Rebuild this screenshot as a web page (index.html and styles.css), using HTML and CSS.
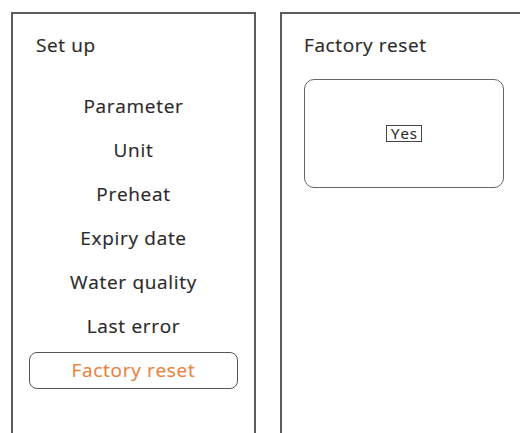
FILE: index.html
```html
<!DOCTYPE html>
<html lang="en">

<head>
    <meta charset="UTF-8">
    <meta name="viewport" content="width=device-width, initial-scale=1.0">
    <title>Set up</title>
    <link rel="stylesheet" href="styles.css">
</head>

<body>
    <div class="screens">
        <!-- menu screen -->
        <div class="panel panel-menu">
            <div class="title">Set up</div>
            <ul class="menu">
                <li class="menu-item">Parameter</li>
                <li class="menu-item">Unit</li>
                <li class="menu-item">Preheat</li>
                <li class="menu-item">Expiry date</li>
                <li class="menu-item">Water quality</li>
                <li class="menu-item">Last error</li>
                <li class="menu-item active"><span class="active-box">Factory reset</span></li>
            </ul>
        </div>

        <!-- confirm screen -->
        <div class="panel panel-confirm">
            <div class="title">Factory reset</div>
            <div class="dialog">
                <span class="yes">Yes</span>
            </div>
        </div>
    </div>
</body>

</html>
```

FILE: styles.css
```css
html,
body {
    margin: 0;
    height: 100%;
    overflow: hidden;
    background: #fff;
}

body {
    font-family: "Open Sans", "DejaVu Sans", sans-serif;
    color: #2a2a2a;
    /* the screen font is a bit heavier than Open Sans regular */
    -webkit-text-stroke: 0.2px;
}

.screens {
    display: flex;
    gap: 24px;
    padding: 12px 0 0 11px;
}

.panel {
    height: 421px;
    border: 2px solid #5c5c5c;
    border-bottom: none;
    box-sizing: border-box;
    padding-top: 18px;
}

.panel-menu {
    width: 245px;
    flex: none;
}

.panel-confirm {
    flex: 1;
    border-right: none;
    padding-left: 22px;
}

.title {
    font-size: 19px;
    line-height: 26px;
    letter-spacing: 0.6px;
}

.panel-menu .title {
    padding-left: 23px;
}

.menu {
    list-style: none;
    margin: 26px 0 0;
    padding: 0;
}

.menu-item {
    height: 44px;
    line-height: 44px;
    font-size: 19px;
    letter-spacing: 0.7px;
    text-align: center;
}

.menu-item.active {
    display: flex;
    align-items: center;
    padding: 0 16px;
}

.active-box {
    flex: 1;
    height: 37px;
    line-height: 34px;
    border: 1.5px solid #555;
    border-radius: 8px;
    box-sizing: border-box;
    color: #e8843f;
}

.dialog {
    width: 200px;
    height: 109px;
    margin-top: 21px;
    border: 1.5px solid #666;
    border-radius: 10px;
    box-sizing: border-box;
    display: flex;
    align-items: center;
    justify-content: center;
}

.yes {
    font-size: 15px;
    line-height: 15px;
    letter-spacing: 1px;
    padding: 0 3px 0 4px;
    border: 1.5px solid #444;
}
```
